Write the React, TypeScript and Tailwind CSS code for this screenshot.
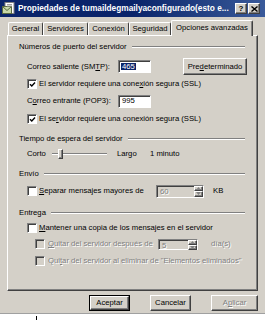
const raised =
  'border border-t-white border-l-white border-r-[#404040] border-b-[#404040] shadow-[inset_-1px_-1px_0_#808080]';
const sunken =
  'border border-t-[#808080] border-l-[#808080] border-r-white border-b-white shadow-[inset_1px_1px_0_#404040]';
const dimText = 'text-[#808080] [text-shadow:1px_1px_0_#ffffff]';

function GroupHeader({ label }: { label: string }) {
  return (
    <div className="flex h-[10px] items-center pr-[12px]">
      <span>{label}</span>
      <div className="ml-[5px] h-[2px] flex-1 border-t border-b border-t-[#808080] border-b-white" />
    </div>
  );
}

function CheckBox({ checked, disabled }: { checked?: boolean; disabled?: boolean }) {
  return (
    <div
      className={`flex h-[10px] w-[10px] shrink-0 items-center justify-center ${sunken} ${
        disabled ? 'bg-[#d4d0c8]' : 'bg-white'
      }`}
    >
      {checked ? (
        <svg width="7" height="7" viewBox="0 0 7 7">
          <path d="M1 3.2 L2.8 5 L6 1.6" fill="none" stroke="#000" strokeWidth="1.4" />
        </svg>
      ) : null}
    </div>
  );
}

function SpinBox({ value, className }: { value: string; className: string }) {
  return (
    <div className={`flex items-stretch bg-[#d4d0c8] ${sunken} ${className}`}>
      <span className={`flex-1 pl-[3px] leading-[11px] ${dimText}`}>{value}</span>
      <div className="flex w-[9px] flex-col">
        <div className={`flex flex-1 items-center justify-center bg-[#d4d0c8] ${raised}`}>
          <svg width="5" height="3" viewBox="0 0 5 3">
            <path d="M0 3 L2.5 0 L5 3 Z" fill="#808080" />
          </svg>
        </div>
        <div className={`flex flex-1 items-center justify-center bg-[#d4d0c8] ${raised}`}>
          <svg width="5" height="3" viewBox="0 0 5 3">
            <path d="M0 0 L2.5 3 L5 0 Z" fill="#808080" />
          </svg>
        </div>
      </div>
    </div>
  );
}

export default function App() {
  return (
    <div className="flex h-[320px] w-[265px] flex-col overflow-hidden bg-[#d4d0c8] font-['Liberation_Sans',Arial,sans-serif] text-[7.7px] leading-none text-black">
      {/* title bar */}
      <div className="flex h-[17px] items-center bg-gradient-to-r from-[#0a246a] via-[#0a246a] to-[#3a5a9a] pl-[2px] pr-[5px]">
        <svg width="14" height="13" viewBox="0 0 14 13">
          <rect x="3" y="0.5" width="9" height="11" fill="#ffffff" stroke="#808080" />
          <rect x="0.5" y="4.5" width="9" height="7" fill="#c8d8a8" stroke="#5a6a40" />
          <path d="M0.5 4.5 L5 8.5 L9.5 4.5" fill="none" stroke="#5a6a40" />
          <path d="M5 2.5 H10 M5 4 H10" stroke="#a0a0a0" />
        </svg>
        <span className="ml-[2px] flex-1 truncate text-[8.3px] font-bold text-white">
          Propiedades de tumaildegmailyaconfigurado(esto e...
        </span>
        <div className={`ml-[6px] flex h-[11px] w-[12px] items-center justify-center bg-[#d4d0c8] text-[8px] font-bold ${raised}`}>
          ?
        </div>
        <div className={`ml-[1px] flex h-[11px] w-[12px] items-center justify-center bg-[#d4d0c8] ${raised}`}>
          <svg width="7" height="6" viewBox="0 0 7 6">
            <path d="M0.5 0.5 L6.5 5.5 M6.5 0.5 L0.5 5.5" stroke="#000" strokeWidth="1.4" />
          </svg>
        </div>
      </div>

      <div className="px-[7px] pt-[3px]">
        {/* tabs */}
        <div className="flex h-[15px] items-end pl-[1px]">
          <div className={`flex h-[13px] w-[35px] items-center justify-center rounded-t-[2px] border-t border-l border-r border-t-white border-l-white border-r-[#404040]`}>
            General
          </div>
          <div className="flex h-[13px] w-[45px] items-center justify-center rounded-t-[2px] border-t border-l border-r border-t-white border-l-white border-r-[#404040]">
            Servidores
          </div>
          <div className="flex h-[13px] w-[41px] items-center justify-center rounded-t-[2px] border-t border-l border-r border-t-white border-l-white border-r-[#404040]">
            Conexión
          </div>
          <div className="flex h-[13px] w-[42px] items-center justify-center rounded-t-[2px] border-t border-l border-r border-t-white border-l-white border-r-[#404040]">
            Seguridad
          </div>
          <div className="relative z-10 mb-[-1px] flex h-[16px] w-[82px] items-center justify-center rounded-t-[2px] border-t border-l border-r border-t-white border-l-white border-r-[#404040] bg-[#d4d0c8] pb-[1px] shadow-[inset_-1px_0_0_#808080]">
            Opciones avanzadas
          </div>
        </div>

        {/* panel */}
        <div className={`flex h-[256px] flex-col pl-[11px] pt-[6px] ${raised}`}>
          <GroupHeader label="Números de puerto del servidor" />

          <div className="mt-[6px] ml-[8px] flex h-[17px] items-center">
            <span className="w-[91px]">
              Correo saliente (SM<u>T</u>P):
            </span>
            <div className={`flex h-[13px] w-[33px] items-center bg-white pl-[2px] ${sunken}`}>
              <span className="bg-[#0a246a] px-[1px] text-white">465</span>
            </div>
            <div className={`ml-[32px] flex h-[17px] w-[64px] items-center justify-center bg-[#d4d0c8] ${raised}`}>
              Pre<u>d</u>eterminado
            </div>
          </div>

          <div className="mt-[4px] ml-[8px] flex h-[10px] items-center gap-[2px]">
            <CheckBox checked />
            <span>
              El servidor requiere una cone<u>x</u>ión segura (SSL)
            </span>
          </div>

          <div className="mt-[5px] ml-[8px] flex h-[14px] items-center">
            <span className="w-[91px]">
              C<u>o</u>rreo entrante (POP3):
            </span>
            <div className={`flex h-[13px] w-[33px] items-center bg-white pl-[3px] ${sunken}`}>995</div>
          </div>

          <div className="mt-[6px] ml-[8px] flex h-[10px] items-center gap-[2px]">
            <CheckBox checked />
            <span>
              El se<u>r</u>vidor requiere una conexión segura (SSL)
            </span>
          </div>

          <div className="mt-[10px]">
            <GroupHeader label="Tiempo de espera del servidor" />
          </div>

          <div className="mt-[4px] ml-[8px] flex h-[12px] items-center">
            <span className="w-[25px]">Corto</span>
            <div className="relative flex h-[12px] w-[55px] items-center">
              <div className="h-[2px] w-full border-t border-b border-t-[#808080] border-b-white" />
              <div className={`absolute left-[6px] top-[1px] h-[10px] w-[5px] bg-[#d4d0c8] ${raised}`} />
            </div>
            <span className="ml-[10px] w-[33px]">Largo</span>
            <span>1 minuto</span>
          </div>

          <div className="mt-[9px]">
            <GroupHeader label="Envío" />
          </div>

          <div className="mt-[5px] ml-[8px] flex h-[14px] items-center">
            <CheckBox />
            <span className="ml-[2px] w-[117px]">
              <u>S</u>eparar mensajes mayores de
            </span>
            <SpinBox value="60" className="h-[13px] w-[48px]" />
            <span className="ml-[9px]">KB</span>
          </div>

          <div className="mt-[10px]">
            <GroupHeader label="Entrega" />
          </div>

          <div className="mt-[5px] ml-[8px] flex h-[10px] items-center gap-[2px]">
            <CheckBox />
            <span>
              <u>M</u>antener una copia de los mensajes en el servidor
            </span>
          </div>

          <div className="mt-[5px] ml-[16px] flex h-[12px] items-center">
            <CheckBox disabled />
            <span className={`ml-[3px] w-[110px] ${dimText}`}>
              <u>Q</u>uitar del servidor después de
            </span>
            <SpinBox value="5" className="h-[11px] w-[40px]" />
            <span className={`ml-[13px] ${dimText}`}>día(s)</span>
          </div>

          <div className="mt-[6px] ml-[16px] flex h-[10px] items-center">
            <CheckBox disabled />
            <span className={`ml-[3px] ${dimText}`}>
              Qui<u>t</u>ar del servidor al eliminar de "Elementos eliminados"
            </span>
          </div>
        </div>
      </div>

      {/* buttons */}
      <div className="mt-[4px] flex h-[16px] gap-[20px] pl-[89px]">
        <div className="flex w-[41px] border border-black">
          <div className={`flex flex-1 items-center justify-center bg-[#d4d0c8] ${raised}`}>Aceptar</div>
        </div>
        <div className={`flex w-[41px] items-center justify-center bg-[#d4d0c8] ${raised}`}>Cancelar</div>
        <div className={`flex w-[47px] items-center justify-center bg-[#d4d0c8] ${raised} ${dimText}`}>
          A<u>p</u>licar
        </div>
      </div>

      <div className="mt-[2px] flex flex-1 border-t border-[#a0a0a0] bg-white pl-[36px]">
        <div className="mt-[2px] w-[1px] bg-black" />
      </div>
    </div>
  );
}
